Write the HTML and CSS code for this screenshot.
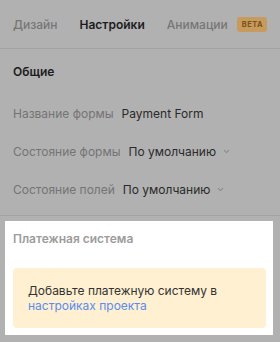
FILE: index.html
```html
<!DOCTYPE html>
<html lang="ru">
<head>
  <meta charset="UTF-8">
  <meta name="viewport" content="width=device-width, initial-scale=1.0">
  <title>Настройки формы</title>
  <link rel="stylesheet" href="styles.css">
</head>
<body>
  <div class="tabs">
    <span class="tab">Дизайн</span>
    <span class="tab active">Настройки</span>
    <span class="tab">Анимации</span>
    <span class="badge">BETA</span>
  </div>

  <div class="general">
    <h3>Общие</h3>
    <div class="row">
      <span class="label">Название формы</span>
      <span class="value">Payment Form</span>
    </div>
    <div class="row">
      <span class="label">Состояние формы</span>
      <span class="value">По умолчанию</span>
      <svg class="chevron" width="7" height="5" viewBox="0 0 7 5"><path d="M1 1.2 3.5 3.6 6 1.2" fill="none" stroke="#8a8a8a" stroke-width="1.1"/></svg>
    </div>
    <div class="row">
      <span class="label">Состояние полей</span>
      <span class="value">По умолчанию</span>
      <svg class="chevron" width="7" height="5" viewBox="0 0 7 5"><path d="M1 1.2 3.5 3.6 6 1.2" fill="none" stroke="#8a8a8a" stroke-width="1.1"/></svg>
    </div>
  </div>

  <div class="payment">
    <h4>Платежная система</h4>
    <div class="notice">
      Добавьте платежную систему в <a href="#">настройках проекта</a>
    </div>
  </div>
</body>
</html>
```

FILE: styles.css
```css
* {
  box-sizing: border-box;
}
body {
  margin: 0;
  background: #b1b1b1;
  font-family: Inter, 'Noto Sans', sans-serif;
  font-size: 12px;
  color: #2a2a2a;
}
.tabs {
  display: flex;
  align-items: center;
  height: 49px;
  padding: 0 13px;
  border-bottom: 1px solid #a2a2a2;
}
.tab {
  font-size: 12px;
  font-weight: 500;
  color: #767676;
  margin-right: 22px;
}
.tab.active {
  color: #1d1d1d;
  font-weight: 600;
}
.tab:nth-child(3) {
  margin-right: 9px;
}
.badge {
  display: inline-block;
  font-size: 7.5px;
  font-weight: 700;
  letter-spacing: 0.5px;
  line-height: 15px;
  padding: 0 4px 0 5px;
  border-radius: 3px;
  background: #c79a5e;
  color: #7a5418;
}
.general {
  padding: 14px 13px 7px;
  border-bottom: 1px solid #a2a2a2;
}
.general h3 {
  margin: 0 0 13px;
  font-size: 12px;
  font-weight: 600;
  line-height: 18px;
  color: #1d1d1d;
}
.row {
  display: flex;
  align-items: center;
  height: 38px;
}
.label {
  color: #747474;
  margin-right: 8px;
}
.value {
  color: #2a2a2a;
}
.chevron {
  margin-left: 7px;
  margin-top: 1px;
}
.payment {
  margin: 5px 7px 0 5px;
  padding: 8px 7px 7px 8px;
  background: #fff;
}
.payment h4 {
  margin: 0 0 19px;
  font-size: 12px;
  font-weight: 600;
  line-height: 20px;
  color: #9c9c9c;
}
.notice {
  background: #fef0d0;
  border-radius: 4px;
  padding: 15px 15px 15px;
  line-height: 15px;
  color: #333;
}
.notice a {
  color: #5a8cf0;
  text-decoration: none;
}
```
